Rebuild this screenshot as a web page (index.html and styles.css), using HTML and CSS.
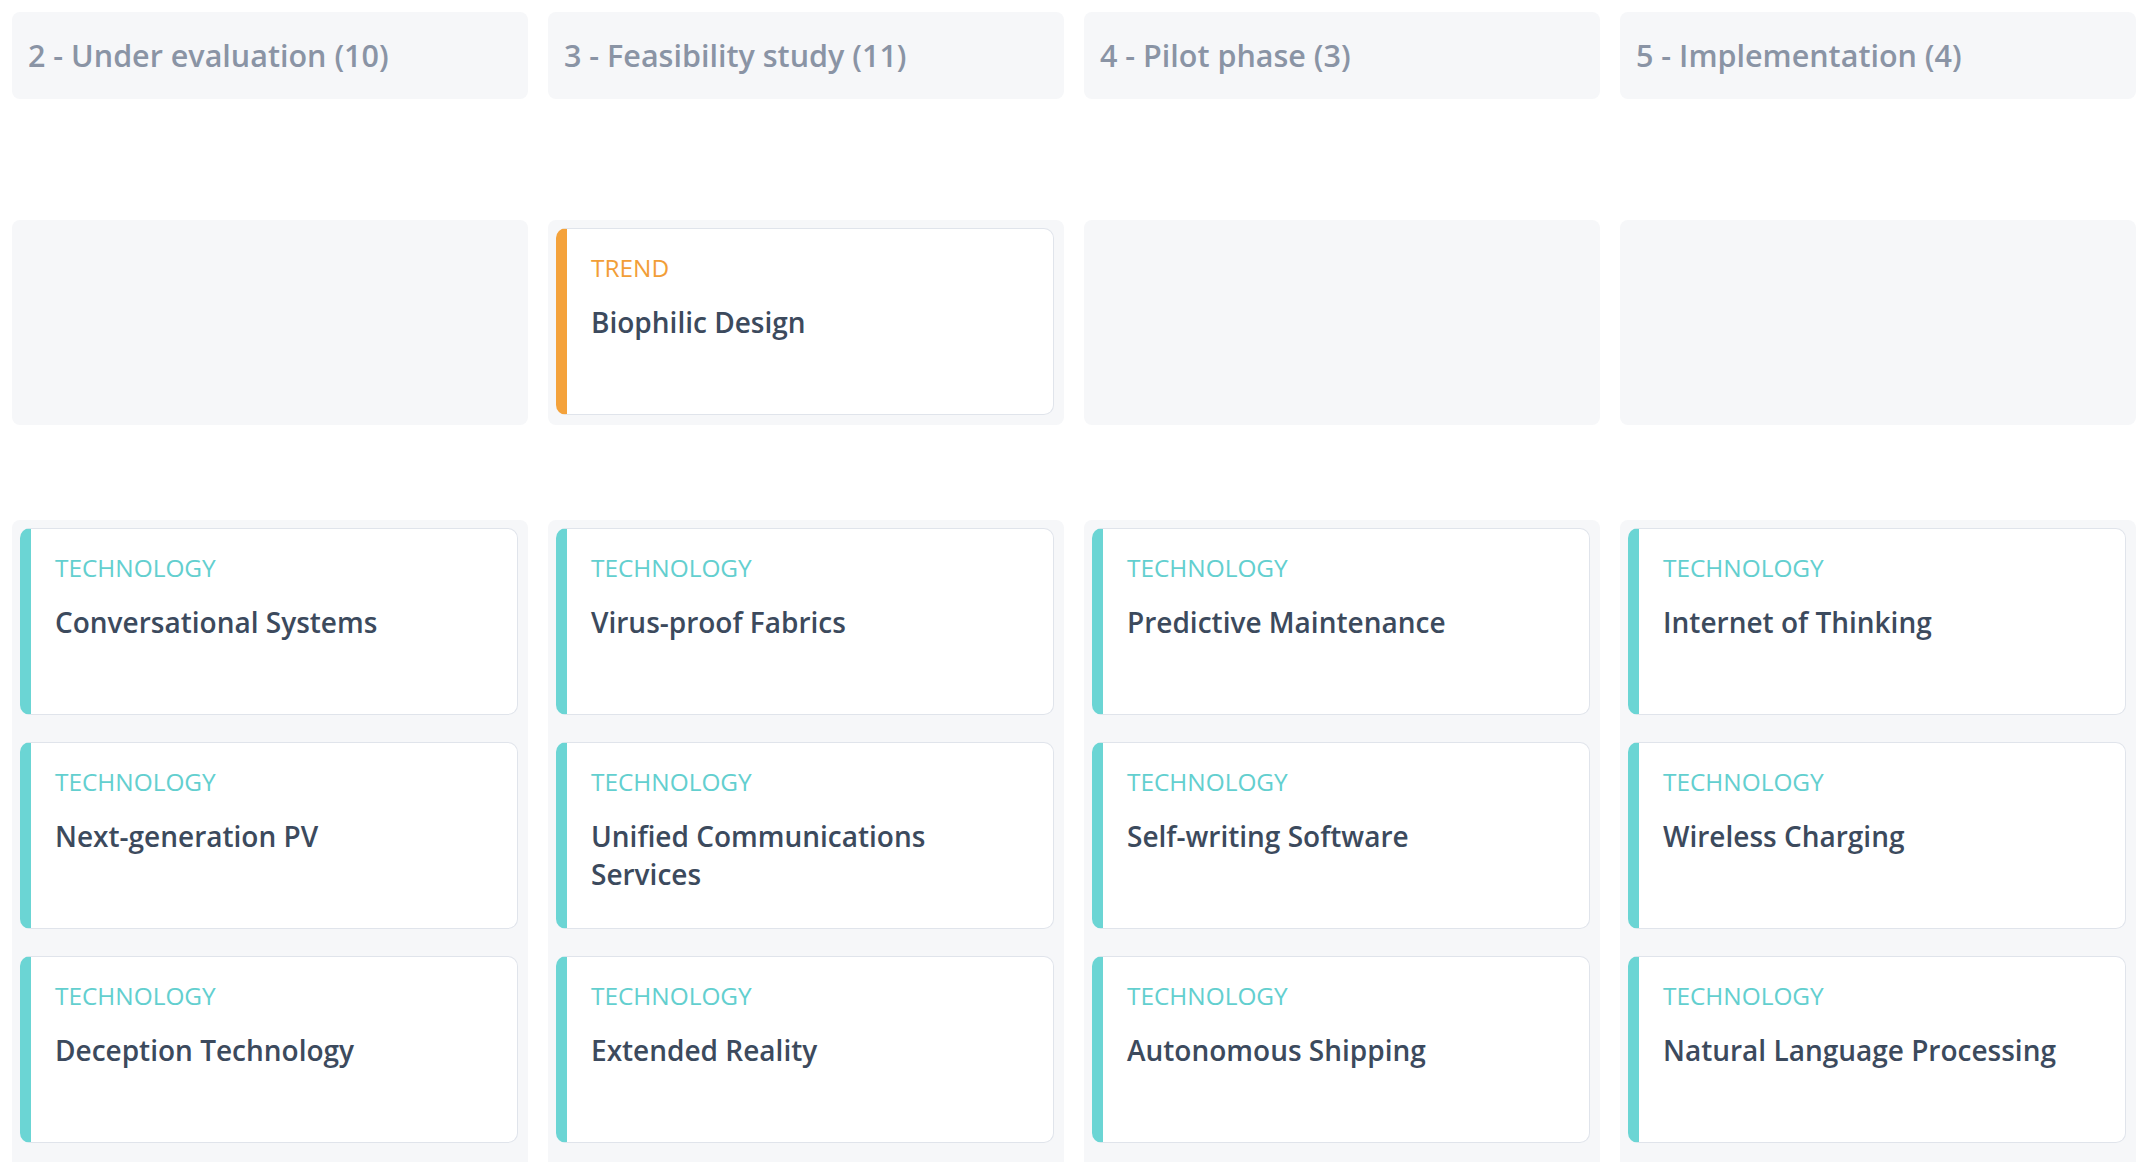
FILE: index.html
```html
<!DOCTYPE html>
<html lang="en">
<head>
<meta charset="utf-8">
<title>Board</title>
<link rel="stylesheet" href="styles.css">
</head>
<body>
<div class="board">
  <div class="row row-head">
    <div class="col-head">2 - Under evaluation (10)</div>
    <div class="col-head">3 - Feasibility study (11)</div>
    <div class="col-head">4 - Pilot phase (3)</div>
    <div class="col-head">5 - Implementation (4)</div>
  </div>

  <div class="row row-trend">
    <div class="lane"></div>
    <div class="lane">
      <div class="card card-trend">
        <div class="card-type">TREND</div>
        <div class="card-title">Biophilic Design</div>
      </div>
    </div>
    <div class="lane"></div>
    <div class="lane"></div>
  </div>

  <div class="row row-tech">
    <div class="lane">
      <div class="card card-tech"><div class="card-type">TECHNOLOGY</div><div class="card-title">Conversational Systems</div></div>
      <div class="card card-tech"><div class="card-type">TECHNOLOGY</div><div class="card-title">Next-generation PV</div></div>
      <div class="card card-tech"><div class="card-type">TECHNOLOGY</div><div class="card-title">Deception Technology</div></div>
    </div>
    <div class="lane">
      <div class="card card-tech"><div class="card-type">TECHNOLOGY</div><div class="card-title">Virus-proof Fabrics</div></div>
      <div class="card card-tech"><div class="card-type">TECHNOLOGY</div><div class="card-title">Unified Communications Services</div></div>
      <div class="card card-tech"><div class="card-type">TECHNOLOGY</div><div class="card-title">Extended Reality</div></div>
    </div>
    <div class="lane">
      <div class="card card-tech"><div class="card-type">TECHNOLOGY</div><div class="card-title">Predictive Maintenance</div></div>
      <div class="card card-tech"><div class="card-type">TECHNOLOGY</div><div class="card-title">Self-writing Software</div></div>
      <div class="card card-tech"><div class="card-type">TECHNOLOGY</div><div class="card-title">Autonomous Shipping</div></div>
    </div>
    <div class="lane">
      <div class="card card-tech"><div class="card-type">TECHNOLOGY</div><div class="card-title">Internet of Thinking</div></div>
      <div class="card card-tech"><div class="card-type">TECHNOLOGY</div><div class="card-title">Wireless Charging</div></div>
      <div class="card card-tech"><div class="card-type">TECHNOLOGY</div><div class="card-title">Natural Language Processing</div></div>
    </div>
  </div>
</div>
</body>
</html>
```

FILE: styles.css
```css
html, body {
  margin: 0;
  padding: 0;
  background: #ffffff;
}

body {
  font-family: "Open Sans", "Noto Sans", sans-serif;
  overflow: hidden;
}

.board {
  padding: 12px 12px 0 12px;
  display: flex;
  flex-direction: column;
}

.row {
  display: grid;
  grid-template-columns: repeat(4, 516px);
  column-gap: 20px;
}

.row-head {
  height: 87px;
}

.col-head {
  background: #f6f7f9;
  border-radius: 8px;
  display: flex;
  align-items: center;
  padding-left: 16px;
  font-size: 30.5px;
  font-weight: 600;
  color: #8a94a5;
  line-height: 1.36;
}

.row-trend {
  margin-top: 121px;
  height: 205px;
}

.row-tech {
  margin-top: 95px;
}

.lane {
  box-sizing: border-box;
  background: #f6f7f9;
  border-radius: 8px;
  padding: 8px 10px 30px 8px;
  display: flex;
  flex-direction: column;
  gap: 27px;
}

.row-trend .lane {
  padding-bottom: 10px;
}

.card {
  box-sizing: border-box;
  height: 187px;
  background: #ffffff;
  border: 1px solid #e0e4eb;
  border-radius: 10px;
  padding: 21px 24px 0 24px;
}

.card-tech {
  border-left: 11px solid #6bd5d4;
}

.card-trend {
  border-left: 11px solid #f4a23b;
}

.card-type {
  font-size: 24.4px;
  line-height: 36px;
  font-weight: 400;
}

.card-tech .card-type {
  color: #63cfcf;
}

.card-trend .card-type {
  color: #f29e37;
}

.card-title {
  margin-top: 17px;
  font-size: 28px;
  line-height: 38px;
  font-weight: 600;
  color: #3c4a5d;
}
```
